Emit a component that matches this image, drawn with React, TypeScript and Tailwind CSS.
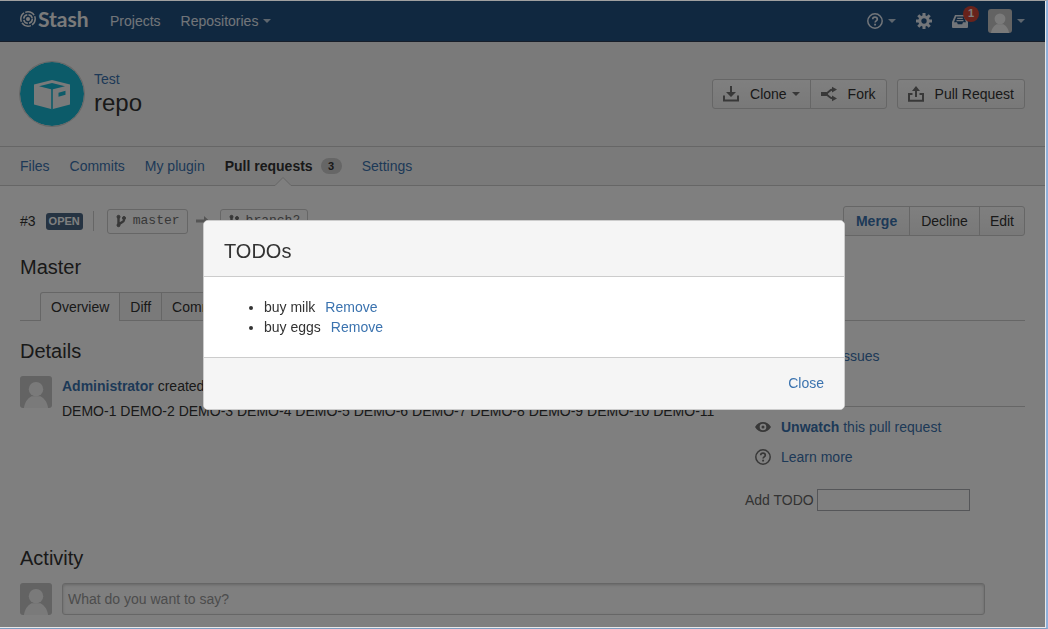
import type { ReactNode } from "react";

const link = "text-[#3b73af] hover:underline";

function Caret({ className = "" }: { className?: string }) {
  return (
    <svg aria-hidden="true" viewBox="0 0 8 4" className={`h-1 w-2 shrink-0 fill-current ${className}`}>
      <path d="M0 0h8L4 4z" />
    </svg>
  );
}

function Avatar({ className }: { className: string }) {
  return (
    <svg role="img" aria-label="User avatar" viewBox="0 0 32 32" className={`shrink-0 rounded-[3px] ${className}`}>
      <rect width="32" height="32" fill="#c6c6c6" />
      <circle cx="16" cy="13.2" r="7.2" fill="#f5f5f5" />
      <path d="M4 32c.4-5 3.3-9.6 7.6-11.8h8.8C24.700 22.400 27.600 27 28 32z" fill="#f5f5f5" />
    </svg>
  );
}

function HelpIcon() {
  return (
    <svg aria-hidden="true" viewBox="0 0 16 16" className="size-4 shrink-0" fill="none" stroke="currentColor">
      <circle cx="8" cy="8" r="7.200" strokeWidth="1.500" />
      <path d="M5.700 6.300C5.700 4.900 6.700 4.100 8 4.100s2.300.8 2.300 2.100c0 1.700-2.200 1.700-2.200 3.400" strokeWidth="1.700" />
      <path d="M8.100 10.700v1.800" strokeWidth="1.900" />
    </svg>
  );
}

function GearIcon() {
  return (
    <svg aria-hidden="true" viewBox="0 0 16 16" className="size-4 shrink-0" fill="none" stroke="currentColor">
      <circle cx="8" cy="8" r="4.200" strokeWidth="3" />
      <path
        d="M8 0v3M8 13v3M0 8h3M13 8h3M2.300 2.300l2.200 2.200M11.500 11.500l2.200 2.200M2.300 13.700l2.200-2.200M11.500 4.500l2.200-2.200"
        strokeWidth="3"
      />
    </svg>
  );
}

function InboxIcon() {
  return (
    <svg aria-hidden="true" viewBox="0 0 16 13" className="h-[13px] w-4" fill="currentColor">
      <path
        fillRule="evenodd"
        d="M3 0h10l3 7v5a1 1 0 0 1-1 1H1a1 1 0 0 1-1-1V7zM4.200 1.500 2 7.300h3l.8 2h4.400l.8-2h3l-2.200-5.800z"
      />
      <path d="M5.200 2.700h5.600V4H5.200zM4.500 5h7v1.300h-7z" />
    </svg>
  );
}

function BranchIcon() {
  return (
    <svg aria-hidden="true" viewBox="0 0 12 14" className="h-[14px] w-3 shrink-0" fill="#707070" stroke="#707070">
      <circle cx="2.500" cy="2.800" r="1.500" />
      <circle cx="2.500" cy="11.200" r="1.500" />
      <circle cx="8" cy="4" r="1.500" />
      <path d="M2.500 3v8M8 4v2C8 8.800 3 8.500 3 11" fill="none" strokeWidth="2.400" />
    </svg>
  );
}

function BranchLabel({ name }: { name: string }) {
  return (
    <span className="flex h-[25px] items-center gap-[5px] rounded-[3px] border border-[#ccc] pr-[7px] pl-2 font-['Liberation_Mono',monospace] text-[13px] text-[#707070]">
      <BranchIcon />
      {name}
    </span>
  );
}

const buttonBase =
  "flex h-[30px] items-center border border-[#ccc] bg-linear-to-b from-white to-[#f2f2f2]";

function Button({ children, className = "px-[10px]" }: { children: ReactNode; className?: string }) {
  return (
    <button type="button" className={`${buttonBase} ${className}`}>
      {children}
    </button>
  );
}

function TopBar() {
  return (
    <header className="flex h-[41px] items-center border-b border-[#2e3d54] bg-[#205081] px-5 text-[#e4ebf3]">
      <a href="#home" className="flex w-[68px] items-center gap-[2px] pb-1 text-[#f5f5f5]">
        <svg aria-hidden="true" viewBox="0 0 16 16" className="size-4 shrink-0" fill="none" stroke="currentColor">
          <circle cx="8" cy="8" r="7.200" strokeWidth="1.500" strokeDasharray="10 1.300" strokeDashoffset="3" />
          <circle cx="8" cy="8" r="4.300" strokeWidth="1.500" strokeDasharray="5.500 1.255" />
          <circle cx="8" cy="8" r="2" fill="currentColor" stroke="none" />
        </svg>
        <span className="font-['Lato','Open_Sans',sans-serif] text-[21px] leading-6 font-bold">Stash</span>
      </a>
      <nav className="ml-[22px] flex gap-5">
        <a href="#projects">Projects</a>
        <a href="#repositories" className="flex items-center gap-[5px]">
          Repositories <Caret className="opacity-80" />
        </a>
      </nav>
      <div className="ml-auto flex items-center">
        <button type="button" aria-label="Help" className="flex items-center gap-[5px]">
          <HelpIcon />
          <Caret className="opacity-80" />
        </button>
        <button type="button" aria-label="Administration" className="ml-5">
          <GearIcon />
        </button>
        <button type="button" aria-label="Inbox" className="relative ml-5">
          <InboxIcon />
          <span className="absolute -top-[9px] left-[11px] flex size-4 items-center justify-center rounded-full bg-[#d04437] text-[11px] font-bold text-white">
            1
          </span>
        </button>
        <button type="button" aria-label="Profile" className="ml-5 flex items-center gap-[5px]">
          <Avatar className="size-6" />
          <Caret className="opacity-80" />
        </button>
      </div>
    </header>
  );
}

function RepoHeader() {
  return (
    <div className="flex h-[105px] items-center border-b border-[#ccc] bg-[#f5f5f5] px-5">
      <svg role="img" aria-label="Repository avatar" viewBox="0 0 64 64" className="size-16 rounded-full ring-1 ring-[#ccc]">
        <circle cx="32" cy="32" r="32" fill="#18b6d2" />
        <path d="M32 18 50 22.500v20L32 47.300 14 42.500v-20z" fill="#f5f5f5" />
        <path d="M32 21 45 24.300 32 27.500 19 24.300z" fill="#18b6d2" />
        <path d="M31.200 27h1.600v20.500h-1.600zM38.500 30.700l7-2v4l-7 2z" fill="#18b6d2" />
      </svg>
      <div className="ml-[10px] flex flex-col pb-[2px]">
        <a href="#test" className={`leading-5 ${link}`}>
          Test
        </a>
        <h1 className="text-[24px] leading-7">repo</h1>
      </div>
      <div className="ml-auto flex gap-[10px]">
        <div className="flex">
          <Button className="rounded-l-[3px] px-[10px]">
            <svg aria-hidden="true" viewBox="0 0 16 16" className="mr-[11px] size-4 fill-[#707070]">
              <path d="M7 0h2v6h4L8 11 3 6h4zM0 9.500h2V13.500h12V9.500h2V15.500H0z" />
            </svg>
            Clone
            <Caret className="ml-[5px] text-[#707070]" />
          </Button>
          <Button className="-ml-px rounded-r-[3px] px-[10px]">
            <svg aria-hidden="true" viewBox="0 0 16 16" className="mr-[11px] size-4 fill-[#707070]">
              <path d="M0 6h5.500l1.500 2-1.500 2H0zM11 .8 16 3.600l-5 2.800zM11 9.600l5 2.800-5 2.800z" />
              <path d="M5 7.500C8 7 8 3.600 12 3.600M5 8.500c3 .5 3 3.900 7 3.900" fill="none" stroke="#707070" strokeWidth="2" />
            </svg>
            Fork
          </Button>
        </div>
        <Button className="rounded-[3px] px-[10px]">
          <svg aria-hidden="true" viewBox="0 0 16 16" className="mr-[11px] size-4 fill-[#707070]">
            <path d="M8 0l4 5H9v6H7V5H4zM0 7h4.500v2H2v4.800h12V9h-2.500V7H16v8.800H0z" />
          </svg>
          Pull Request
        </Button>
      </div>
    </div>
  );
}

function RepoNav() {
  return (
    <nav className="flex h-[39px] items-stretch gap-5 border-b border-[#ccc] bg-[#f5f5f5] px-5">
      <a href="#files" className={`flex items-center ${link}`}>
        Files
      </a>
      <a href="#commits" className={`flex items-center ${link}`}>
        Commits
      </a>
      <a href="#plugin" className={`flex items-center ${link}`}>
        My plugin
      </a>
      <a href="#pulls" aria-current="page" className="relative flex items-center gap-2 font-bold">
        Pull requests
        <span className="flex h-4 w-[21px] items-center justify-center rounded-full bg-[#ccc] text-[11px]">3</span>
        <svg aria-hidden="true" viewBox="0 0 16 9" className="absolute -bottom-px left-1/2 h-[9px] w-4 -translate-x-1/2">
          <path d="M0 8.500 8 .500 16 8.500V9H0z" fill="#fff" />
          <path d="M0 8.500 8 .500 16 8.500" fill="none" stroke="#ccc" />
        </svg>
      </a>
      <a href="#settings" className={`flex items-center ${link}`}>
        Settings
      </a>
    </nav>
  );
}

function PullRequest() {
  return (
    <main className="px-5 pt-5 pb-3">
      <div className="flex h-[30px] items-center">
        <span>#3</span>
        <span className="ml-[10px] flex h-[17px] items-center rounded-[3px] bg-[#4a6785] px-[3px] text-[11px] font-bold text-white">
          OPEN
        </span>
        <span className="ml-[10px] h-5 w-px bg-[#ccc]" />
        <span className="ml-[13px] flex items-center gap-2">
          <BranchLabel name="master" />
          <svg aria-hidden="true" viewBox="0 0 16 10" className="h-[10px] w-4 fill-[#aaa]">
            <path d="M0 3.500h8V0l5.500 5L8 10V6.500H0z" />
          </svg>
          <BranchLabel name="branch2" />
        </span>
        <div className="ml-auto flex">
          <Button className="rounded-l-[3px] px-3 font-bold text-[#3b73af]">Merge</Button>
          <Button className="-ml-px px-[11px]">Decline</Button>
          <Button className="-ml-px rounded-r-[3px] px-[10px]">Edit</Button>
        </div>
      </div>

      <h2 className="mt-[19px] text-[20px] leading-6">Master</h2>

      <div role="tablist" className="mt-[13px] flex h-[29px] border-b border-[#ccc] pl-5">
        <button type="button" role="tab" aria-selected="true" className="-mb-px rounded-tl-[3px] border border-b-0 border-[#ccc] bg-white px-[10px]">
          Overview
        </button>
        <button type="button" role="tab" aria-selected="false" className="border-t border-r border-[#ccc] bg-[#f5f5f5] px-[10px] pt-px">
          Diff
        </button>
        <button type="button" role="tab" aria-selected="false" className="rounded-tr-[3px] border-t border-r border-[#ccc] bg-[#f5f5f5] px-[10px] pt-px">
          Commits
        </button>
      </div>

      <div className="flex gap-[10px] pt-[18px]">
        <section className="min-w-0 flex-1">
          <h3 className="text-[20px] leading-6">Details</h3>
          <div className="mt-[13px] flex gap-[10px]">
            <Avatar className="size-8" />
            <div className="leading-5">
              <p>
                <a href="#admin" className={`font-bold ${link}`}>
                  Administrator
                </a>{" "}
                created a pull request
              </p>
              <p className="mt-[5px]">
                DEMO-1 DEMO-2 DEMO-3 DEMO-4 DEMO-5 DEMO-6 DEMO-7 DEMO-8 DEMO-9 DEMO-10 DEMO-11
              </p>
            </div>
          </div>
        </section>

        <aside className="w-[280px] shrink-0 leading-5">
          <div className="flex h-[68px] items-start border-b border-[#ccc] pt-[7px] pl-[36px]">
            <a href="#issues" className={link}>
              11 linked issues
            </a>
          </div>
          <ul className="flex flex-col gap-[10px] pt-[10px] pl-[10px]">
            <li className="flex items-center gap-[10px]">
              <svg aria-hidden="true" viewBox="0 0 16 16" className="size-4 fill-[#707070]">
                <path fillRule="evenodd" d="M0 8c2-3.300 4.800-5 8-5s6 1.700 8 5c-2 3.300-4.800 5-8 5s-6-1.700-8-5zm8-3.300a3.300 3.300 0 1 0 0 6.600 3.300 3.300 0 0 0 0-6.600z" />
                <circle cx="8" cy="8" r="1.500" />
              </svg>
              <a href="#unwatch" className={link}>
                <b>Unwatch</b> this pull request
              </a>
            </li>
            <li className="flex items-center gap-[10px] text-[#707070]">
              <HelpIcon />
              <a href="#learn" className={link}>
                Learn more
              </a>
            </li>
          </ul>
          <div className="mt-[22px] flex items-center gap-[3px]">
            <label htmlFor="todo" className="text-[#666]">
              Add TODO
            </label>
            <input id="todo" type="text" className="h-[22px] w-[153px] border border-[#abadb3] bg-white px-1" />
          </div>
        </aside>
      </div>

      <section className="mt-[35px]">
        <h3 className="text-[20px] leading-6">Activity</h3>
        <div className="mt-[13px] flex gap-[10px] pr-10">
          <Avatar className="size-8" />
          <input
            type="text"
            aria-label="Comment"
            placeholder="What do you want to say?"
            className="h-8 min-w-0 flex-1 rounded-[3px] border border-[#ccc] bg-white px-[5px] shadow-[inset_0_1px_3px_#ccc] placeholder:text-[#999]"
          />
        </div>
      </section>
    </main>
  );
}

const todos = ["buy milk", "buy eggs"];

function TodoDialog() {
  return (
    <div className="fixed inset-0 flex items-center justify-center">
      <section
        role="dialog"
        aria-modal="true"
        aria-labelledby="todo-title"
        className="w-[642px] max-w-full overflow-hidden rounded-[5px] border border-[#ccc] bg-white"
      >
        <header className="flex h-14 items-center border-b border-[#ccc] bg-[#f5f5f5] px-5 pt-[6px]">
          <h2 id="todo-title" className="text-[20px] leading-6">
            TODOs
          </h2>
        </header>
        <ul className="list-disc py-5 pr-5 pl-[60px] leading-5">
          {todos.map((todo) => (
            <li key={todo}>
              {todo}
              <button type="button" className={`ml-[10px] ${link}`}>
                Remove
              </button>
            </li>
          ))}
        </ul>
        <footer className="flex h-[52px] items-center justify-end border-t border-[#ccc] bg-[#f5f5f5] px-5">
          <button type="button" className={link}>
            Close
          </button>
        </footer>
      </section>
    </div>
  );
}

export default function App() {
  return (
    <div className="flex min-h-screen flex-col border-t border-r-2 border-b border-t-[#a0a0a0] border-r-[#8fb0da] border-b-[#7d9cbf] font-['Liberation_Sans',Arial,sans-serif] text-[14px] text-[#333]">
      <div className="relative flex-1 border-r border-b border-[#e8e8e8] bg-white">
        <TopBar />
        <RepoHeader />
        <RepoNav />
        <PullRequest />
        <div className="absolute inset-0 bg-black/50" />
      </div>
      <TodoDialog />
    </div>
  );
}
